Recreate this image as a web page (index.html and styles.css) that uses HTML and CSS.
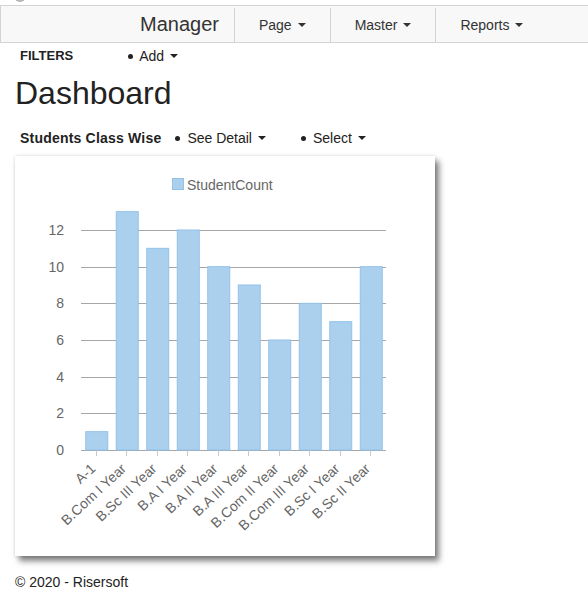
FILE: index.html
```html
<!DOCTYPE html>
<html>
<head>
<meta charset="utf-8">
<title>Dashboard</title>
<link rel="stylesheet" href="styles.css">
</head>
<body>
<div class="topbar"><span class="blob"></span></div>
<nav class="navbar">
  <a class="brand">Manager</a>
  <div class="nav-item">Page<span class="caret"></span></div>
  <div class="nav-item">Master<span class="caret"></span></div>
  <div class="nav-item">Reports<span class="caret"></span></div>
</nav>
<main class="page">
  <div class="filter-row">
    <span class="row-title filters">FILTERS</span>
    <ul class="dd-list filters-list">
      <li>Add<span class="caret"></span></li>
    </ul>
  </div>
  <h1 class="title">Dashboard</h1>
  <div class="filter-row">
    <span class="row-title students">Students Class Wise</span>
    <ul class="dd-list students-list">
      <li>See Detail<span class="caret"></span></li>
      <li>Select<span class="caret"></span></li>
    </ul>
  </div>
  <div class="card">
    <svg class="chart" width="420" height="400" viewBox="15 156 420 400" xmlns="http://www.w3.org/2000/svg">
      <rect x="172.5" y="178.5" width="11" height="11" fill="#abd0ee" stroke="#92c2ea"/>
      <text x="187" y="189.5" class="legend">StudentCount</text>
      <g class="grid">
        <line x1="81" y1="230.5" x2="386" y2="230.5"/>
        <line x1="81" y1="267.5" x2="386" y2="267.5"/>
        <line x1="81" y1="303.5" x2="386" y2="303.5"/>
        <line x1="81" y1="340.5" x2="386" y2="340.5"/>
        <line x1="81" y1="377.5" x2="386" y2="377.5"/>
        <line x1="81" y1="413.5" x2="386" y2="413.5"/>
        <line x1="81" y1="450.5" x2="386" y2="450.5"/>
      </g>
      <g class="ylab">
        <text x="64" y="235">12</text>
        <text x="64" y="272">10</text>
        <text x="64" y="308">8</text>
        <text x="64" y="345">6</text>
        <text x="64" y="382">4</text>
        <text x="64" y="418">2</text>
        <text x="64" y="455">0</text>
      </g>
      <g class="ticks">
        <line x1="96.5" y1="450" x2="96.5" y2="456"/>
        <line x1="126.5" y1="450" x2="126.5" y2="456"/>
        <line x1="157.5" y1="450" x2="157.5" y2="456"/>
        <line x1="187.5" y1="450" x2="187.5" y2="456"/>
        <line x1="218.5" y1="450" x2="218.5" y2="456"/>
        <line x1="248.5" y1="450" x2="248.5" y2="456"/>
        <line x1="279.5" y1="450" x2="279.5" y2="456"/>
        <line x1="309.5" y1="450" x2="309.5" y2="456"/>
        <line x1="340.5" y1="450" x2="340.5" y2="456"/>
        <line x1="370.5" y1="450" x2="370.5" y2="456"/>
      </g>
      <g class="bars">
        <rect x="85.75" y="431.67" width="22" height="18.33"/>
        <rect x="116.25" y="211.67" width="22" height="238.33"/>
        <rect x="146.75" y="248.33" width="22" height="201.67"/>
        <rect x="177.25" y="230" width="22" height="220"/>
        <rect x="207.75" y="266.67" width="22" height="183.33"/>
        <rect x="238.25" y="285" width="22" height="165"/>
        <rect x="268.75" y="340" width="22" height="110"/>
        <rect x="299.25" y="303.33" width="22" height="146.67"/>
        <rect x="329.75" y="321.67" width="22" height="128.33"/>
        <rect x="360.25" y="266.67" width="22" height="183.33"/>
      </g>
      <g class="xlab">
        <text transform="translate(94,467) rotate(-43)">A-1</text>
        <text transform="translate(124.5,467) rotate(-43)">B.Com I Year</text>
        <text transform="translate(155,467) rotate(-43)">B.Sc III Year</text>
        <text transform="translate(185.5,467) rotate(-43)">B.A I Year</text>
        <text transform="translate(216,467) rotate(-43)">B.A II Year</text>
        <text transform="translate(246.5,467) rotate(-43)">B.A III Year</text>
        <text transform="translate(277,467) rotate(-43)">B.Com II Year</text>
        <text transform="translate(307.5,467) rotate(-43)">B.Com III Year</text>
        <text transform="translate(338,467) rotate(-43)">B.Sc I Year</text>
        <text transform="translate(368.5,467) rotate(-43)">B.Sc II Year</text>
      </g>
    </svg>
  </div>
  <footer class="footer">© 2020 - Risersoft</footer>
</main>
</body>
</html>
```

FILE: styles.css
```css
html, body {
  margin: 0;
  padding: 0;
  background: #fff;
}
body {
  font-family: "Liberation Sans", Arial, sans-serif;
  font-size: 14px;
  line-height: 20px;
  color: #333;
}
.topbar {
  height: 5px;
  overflow: hidden;
}
.blob {
  display: block;
  width: 12px;
  height: 12px;
  margin: -10px 0 0 14px;
  border-radius: 50%;
  background: #b5b5b5;
}
.navbar {
  display: flex;
  align-items: stretch;
  height: 36px;
  padding-left: 124px;
  background: #f8f8f8;
  border: 1px solid #d3d3d3;
  border-right: none;
}
.brand {
  display: flex;
  align-items: center;
  padding: 0 15px;
  font-size: 20px;
  color: #333;
  padding-bottom: 1px;
}
.nav-item {
  display: flex;
  align-items: center;
  margin-top: 2px;
  padding: 0 24px;
  border-left: 1px solid #d3d3d3;
  color: #333;
}
.caret {
  display: inline-block;
  width: 0;
  height: 0;
  margin-left: 6px;
  border-top: 4px solid #333;
  border-left: 4px solid transparent;
  border-right: 4px solid transparent;
}
.page {
  padding-left: 15px;
}
.filter-row {
  display: flex;
  align-items: center;
  height: 20px;
  padding-left: 5px;
}
.filter-row:first-child {
  margin-top: 3px;
}
.row-title {
  font-weight: bold;
  color: #222;
}
.filters {
  font-size: 13px;
}
.students {
  letter-spacing: 0.2px;
}
.dd-list {
  display: flex;
  gap: 35px;
  list-style: none;
  margin: 0;
  padding: 0;
}
.filters-list {
  margin-left: 55px;
}
.students-list {
  margin-left: 14px;
}
.dd-list li {
  display: flex;
  align-items: center;
  color: #222;
}
.dd-list li::before {
  content: "";
  width: 5px;
  height: 5px;
  border-radius: 50%;
  background: #222;
  margin-right: 6px;
}
.students-list li::before {
  margin-right: 7px;
}
.dd-list .caret {
  border-top-color: #222;
}
.title {
  margin: 10px 0 17px;
  font-size: 32px;
  line-height: 1.1;
  font-weight: normal;
  color: #222;
}
.card {
  width: 420px;
  height: 400px;
  margin-top: 8px;
  background: #fff;
  box-shadow: 0 0 3px rgba(0, 0, 0, 0.15), 4px 5px 6px rgba(0, 0, 0, 0.5);
}
.chart {
  display: block;
  font-family: "Liberation Sans", Arial, sans-serif;
}
.legend {
  font-size: 14px;
  fill: #666;
}
.grid line {
  stroke: #a6a6a6;
  stroke-width: 1;
}
.ticks line {
  stroke: #c8c8c8;
  stroke-width: 1;
}
.ylab text {
  font-size: 14px;
  fill: #666;
  text-anchor: end;
}
.bars rect {
  fill: #abd0ee;
  stroke: #92c2ea;
  stroke-width: 1;
}
.xlab text {
  font-size: 14px;
  fill: #666;
  text-anchor: end;
  dominant-baseline: middle;
}
.footer {
  margin-top: 16px;
  padding-left: 0;
  color: #222;
}
```
